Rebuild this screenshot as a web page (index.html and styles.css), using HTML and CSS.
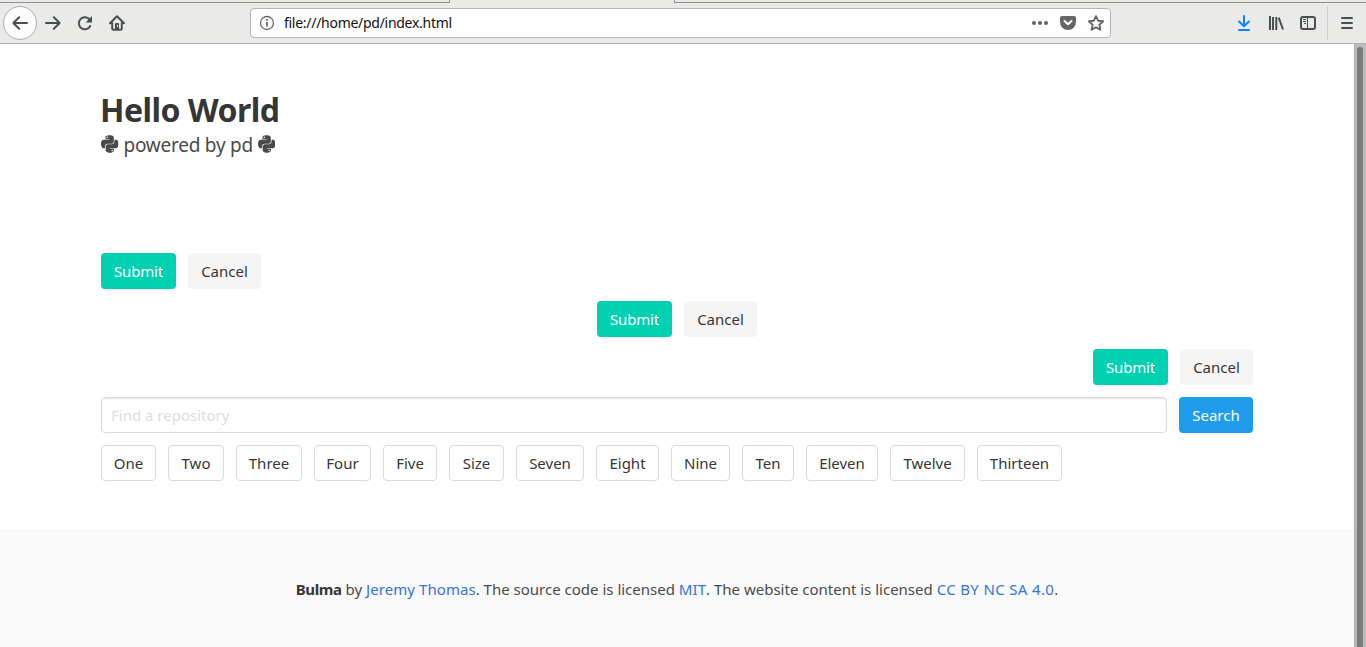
FILE: index.html
```html
<!DOCTYPE html>
<html lang="en">
<head>
<meta charset="utf-8">
<title>Hello World</title>
<link rel="stylesheet" href="styles.css">
</head>
<body>
<svg width="0" height="0" class="defs"><symbol id="python" viewBox="0 0 448 512"><path d="M439.8 200.5c-7.7-30.9-22.3-54.2-53.4-54.2h-40.1v47.4c0 36.8-31.2 67.8-66.8 67.8H172.7c-29.2 0-53.4 25-53.4 54.3v101.8c0 29 25.2 46 53.4 54.3 33.8 9.9 66.3 11.7 106.8 0 26.9-7.8 53.4-23.5 53.4-54.3v-40.7H226.2v-13.6h160.2c31.1 0 42.6-21.7 53.4-54.2 11.2-33.5 10.7-65.7 0-108.6zM286.2 404c11.1 0 20.1 9.1 20.1 20.3 0 11.3-9 20.4-20.1 20.4-11 0-20.1-9.2-20.1-20.4.1-11.3 9.1-20.3 20.1-20.3zM167.8 248.1h106.8c29.7 0 53.4-24.5 53.4-54.3V91.9c0-29-24.4-50.7-53.4-55.6-35.8-5.9-74.7-5.6-106.8.1-45.2 8-53.4 24.7-53.4 55.6v40.7h106.9v13.6h-147c-31.1 0-58.3 18.7-66.8 54.2-9.8 40.7-10.2 66.1 0 108.6 7.6 31.6 25.7 54.2 56.8 54.2H101v-48.8c0-35.3 30.5-66.4 66.8-66.4zm-6.7-142.6c-11.1 0-20.1-9.1-20.1-20.3.1-11.3 9-20.4 20.1-20.4 11 0 20.1 9.2 20.1 20.4s-9 20.3-20.1 20.3z"/></symbol></svg>
<div class="tabs"><i class="tab-edge tab-left"></i><i class="tab-gap"></i><i class="tab-edge tab-right"></i></div>
<header class="toolbar">
  <div class="nav">
    <span class="back"><svg class="icon" viewBox="0 0 16 16"><path class="line" d="M15 8H2M7.200 2.200L1.400 8l5.800 5.800"/></svg></span>
    <svg class="icon" viewBox="0 0 16 16"><path class="line" d="M1 8h13M8.800 2.200L14.600 8l-5.800 5.800"/></svg>
    <svg class="icon" viewBox="0 0 16 16"><path class="line" d="M12.600 4.600A6 6 0 1 0 13.200 11"/><path d="M15 1v6.500H8.700z"/></svg>
    <svg class="icon" viewBox="0 0 16 16"><path class="line" d="M1 8.300L8 1.300l7 7M3.200 8v5.500q0 1.200 1.200 1.200h7.200q1.200 0 1.200-1.200V8"/><path fill-rule="evenodd" d="M6 14V9q0-1 1-1h2q1 0 1 1v5zM8 10v2h1v-2z"/></svg>
  </div>
  <div class="url">
    <svg class="icon info" viewBox="0 0 16 16"><circle cx="8" cy="8" r="6.500"/><path d="M8 7v4.500M8 4v1.700"/></svg>
    <span class="address">file:///home/pd/index.html</span>
    <svg class="icon page" viewBox="0 0 16 16"><circle cx="2" cy="8" r="2"/><circle cx="8" cy="8" r="2"/><circle cx="14" cy="8" r="2"/></svg>
    <svg class="icon page" viewBox="0 0 16 16"><path d="M2 1h12q2 0 2 2v4a8 8 0 0 1-16 0V3q0-2 2-2z"/><path class="tick" d="M4.500 6L8 9.300 11.500 6"/></svg>
    <svg class="icon page" viewBox="0 0 16 16"><path class="star" d="M8 1.200l2.100 4.500 5 .600-3.700 3.400 1 5L8 12.300l-4.400 2.400 1-5L.9 6.300l5-.600z"/></svg>
  </div>
  <div class="tools">
    <svg class="icon download" viewBox="0 0 16 16"><path class="line" d="M8 1v10M3 6.500L8 11.300l5-4.800M3 15h10"/></svg>
    <svg class="icon" viewBox="0 0 16 16"><path class="line books" d="M2 1v14M5 2v13M8.300 2v13M10.700 2.600L15 14.500"/></svg>
    <svg class="icon" viewBox="0 0 16 16"><rect class="line" x="1" y="2" width="14" height="12" rx="2"/><path class="thin" d="M7.500 2v12M3 4.500h3M3 6.500h3M4 8.500h2"/></svg>
    <i class="divider"></i>
    <svg class="icon" viewBox="0 0 16 16"><path class="line" d="M3 3h10M3 8h10M3 13h10"/></svg>
  </div>
</header>
<div class="view">
  <div class="document">
    <main class="section">
      <h1 class="title"><span>Hello World</span></h1>
      <p class="subtitle"><svg class="python"><use href="#python"/></svg><span>powered by pd</span><svg class="python"><use href="#python"/></svg></p>
      <div class="rows">
        <div class="row"><a class="button primary">Submit</a><a class="button light">Cancel</a></div>
        <div class="row centered"><a class="button primary">Submit</a><a class="button light">Cancel</a></div>
        <div class="row right"><a class="button primary">Submit</a><a class="button light">Cancel</a></div>
        <div class="row"><input class="input" type="text" placeholder="Find a repository"><a class="button search">Search</a></div>
        <div class="row numbers">
          <a class="button">One</a><a class="button">Two</a><a class="button">Three</a><a class="button">Four</a><a class="button">Five</a><a class="button">Size</a><a class="button">Seven</a><a class="button">Eight</a><a class="button">Nine</a><a class="button">Ten</a><a class="button">Eleven</a><a class="button">Twelve</a><a class="button">Thirteen</a>
        </div>
      </div>
    </main>
    <footer class="footer"><p><strong>Bulma</strong> by <a>Jeremy Thomas</a>. The source code is licensed <a>MIT</a>. The website content is licensed <a class="license">CC BY NC SA 4.0</a>.</p></footer>
  </div>
  <div class="scrollbar"><div class="thumb"></div></div>
</div>
</body>
</html>
```
FILE: styles.css
```css
* { box-sizing: border-box; }
body { margin: 0; height: 647px; overflow: hidden; display: flex; flex-direction: column; background: #fff; color: #4a4a4a; font: 15px/24px "Noto Sans", "Open Sans", sans-serif; }
.defs { position: absolute; }
.tabs { height: 3px; display: flex; background: #eaeae8; flex: none; }
.tab-edge { border-bottom: 1px solid #8e908f; }
.tab-left { width: 450px; border-right: 1px solid #8e908f; }
.tab-gap { width: 224px; }
.tab-right { flex: 1; border-left: 1px solid #8e908f; }
.toolbar { height: 41px; flex: none; display: flex; align-items: center; background: #eaeae8; border-bottom: 1px solid #b1b3b2; }
.icon { width: 16px; height: 16px; flex: none; fill: #4a4f51; overflow: visible; }
.line { fill: none; stroke: #4a4f51; stroke-width: 2; stroke-linecap: round; stroke-linejoin: round; }
.nav { width: 250px; padding-left: 3px; display: flex; align-items: center; gap: 16px; }
.back { width: 34px; height: 34px; border: 1px solid #adafae; border-radius: 50%; background: #fcfcfc; display: flex; align-items: center; justify-content: center; margin-right: -8px; }
.url { width: 861px; height: 30px; border: 1px solid #b4b6b5; border-radius: 4px; background: #fff; display: flex; align-items: center; padding: 0 6px 0 8px; gap: 12px; }
.info { fill: none; stroke: #6a6a6a; stroke-width: 1.3; }
.info path { stroke-width: 1.8; }
.address { flex: 1; margin-left: -3px; color: #111; font-size: 14px; letter-spacing: -.28px; }
.page { fill: #656565; }
.tick, .star { fill: none; stroke: #656565; stroke-width: 1.9; stroke-linejoin: round; }
.tick { stroke: #fff; stroke-width: 2; stroke-linecap: round; }
.tools { flex: 1; display: flex; align-items: center; justify-content: flex-end; gap: 16px; padding-right: 11px; }
.download .line { stroke: #0a84ff; }
.books { stroke-linecap: butt; }
.thin { fill: none; stroke: #4a4f51; stroke-width: 1; }
.divider { width: 1px; height: 34px; background: #d0d1d0; margin: 0 -5px; }
.view { flex: 1; display: flex; min-height: 0; }
.document { flex: 1; display: flex; flex-direction: column; }
.section { height: 485px; padding: 48px 101px 0; }
.title { margin: 0 0 0 -1px; font-size: 32px; line-height: 36px; color: #363636; letter-spacing: -.53px; }
.subtitle { margin: 5px 0 0; height: 25px; display: flex; align-items: center; gap: 5px; font-size: 19px; line-height: 25px; letter-spacing: -.24px; }
.python { width: 17.5px; height: 20px; fill: #4a4a4a; margin-top: -3px; }
.rows { margin-top: 95px; display: grid; gap: 12px; }
.row { display: flex; gap: 12px; height: 36px; }
.centered { justify-content: center; }
.right { justify-content: flex-end; }
.button { height: 36px; border: 1px solid #dbdbdb; border-radius: 4px; color: #363636; display: flex; align-items: center; justify-content: center; white-space: nowrap; }
.primary { width: 75px; background: #00d1b2; border: 0; color: #fff; letter-spacing: -.2px; }
.light { width: 73px; background: #f5f5f5; border: 0; }
.search { width: 74px; background: #209cee; border: 0; color: #fff; }
.input { flex: 1; border: 1px solid #dbdbdb; border-radius: 4px; padding: 0 9px; font: inherit; box-shadow: inset 0 1px 2px rgba(10,10,10,.1); }
.input::placeholder { color: #dedede; opacity: 1; }
.numbers { display: grid; grid-template-columns: 55px 56px 66px 57px 54px 55px 68px 63px 59px 52px 72px 75px 85px; }
.footer { flex: 1; background: #fafafa; padding-top: 48px; text-align: center; }
.footer p { margin: 0; white-space: nowrap; }
.footer a { color: #3273dc; letter-spacing: .06px; }
.footer .license { letter-spacing: .35px; }
.footer strong { color: #363636; letter-spacing: -.35px; }
.scrollbar { width: 12px; background: #babcbb; padding: 3px 2px 0; border-left: 1px solid #aeb0af; }
.thumb { width: 6px; height: 610px; border-radius: 3px; background: #777c7e; }
```
